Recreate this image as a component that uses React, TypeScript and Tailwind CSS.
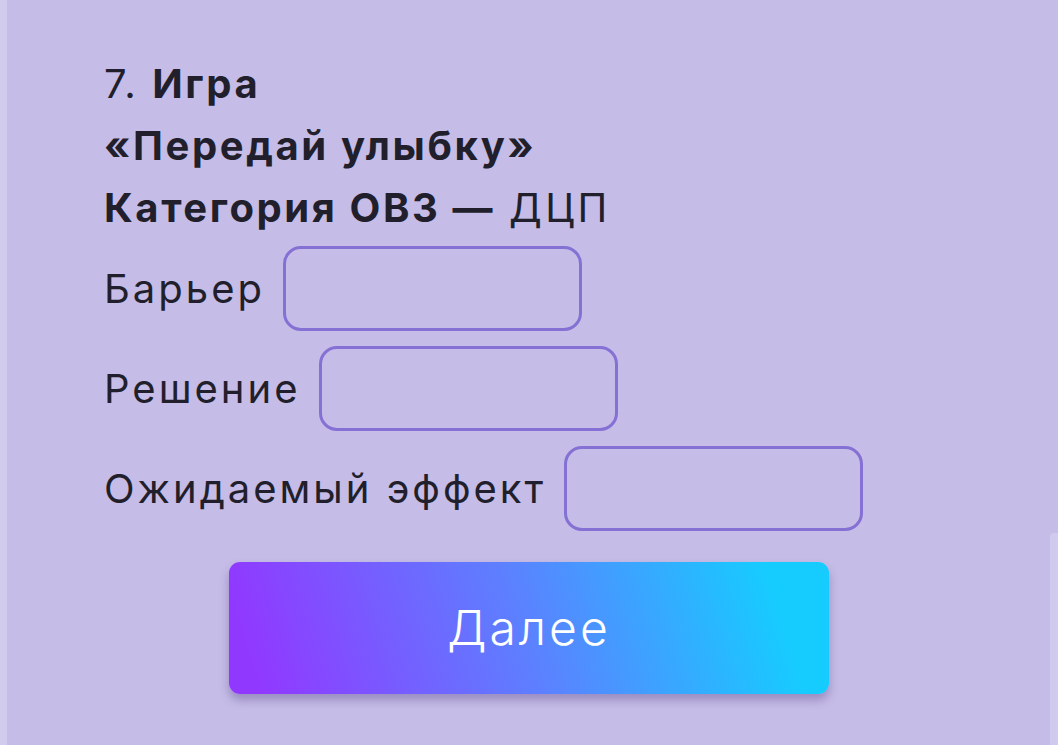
import { useState } from "react";

type Field = { label: string; key: string };

const fields: Field[] = [
  { label: "Барьер", key: "barrier" },
  { label: "Решение", key: "solution" },
  { label: "Ожидаемый эффект", key: "effect" },
];

export default function App() {
  const [values, setValues] = useState<Record<string, string>>({});

  return (
    <div className="relative flex min-h-[745px] w-full overflow-hidden bg-[#c5bce7] font-['Inter','Noto_Sans',sans-serif] text-[#221f2c]">
      {/* left page edge */}
      <div className="w-[7px] shrink-0 bg-[#d1cbee]" />

      <main className="flex flex-1 flex-col pl-[97px] pt-[53px]">
        <h2 className="text-[40px] leading-[62px] tracking-[2.6px]">
          <div>
            7. <b className="font-bold">Игра</b>
          </div>
          <div className="font-bold">«Передай улыбку»</div>
          <div>
            <b className="font-bold">Категория ОВЗ —</b> <span className="tracking-[3.4px]">ДЦП</span>
          </div>
        </h2>

        <div className="mt-[7px] flex flex-col gap-[15px]">
          {fields.map((f) => (
            <label key={f.key} className="flex items-center gap-[18px]">
              <span className="text-[40px] leading-none tracking-[3px]">{f.label}</span>
              <input
                value={values[f.key] ?? ""}
                onChange={(e) => setValues({ ...values, [f.key]: e.target.value })}
                className="h-[85px] w-[299px] rounded-[18px] border-[3px] border-[#8570d4] bg-transparent px-4 text-[30px] outline-none"
              />
            </label>
          ))}
        </div>

        <button className="ml-[125px] mt-[31px] flex h-[132px] w-[600px] items-center justify-center rounded-[11px] bg-linear-[72deg] from-[#9138ff] from-5% via-[#5b82ff] to-[#16ccff] to-90% text-[48px] font-light tracking-[3px] text-white shadow-[0_6px_10px_rgba(70,50,120,0.35)]">
          Далее
        </button>
      </main>

      {/* right page edge */}
      <div className="absolute right-0 top-[533px] bottom-0 w-[8px] rounded-tl-[4px] bg-[#d0caee]" />
    </div>
  );
}
